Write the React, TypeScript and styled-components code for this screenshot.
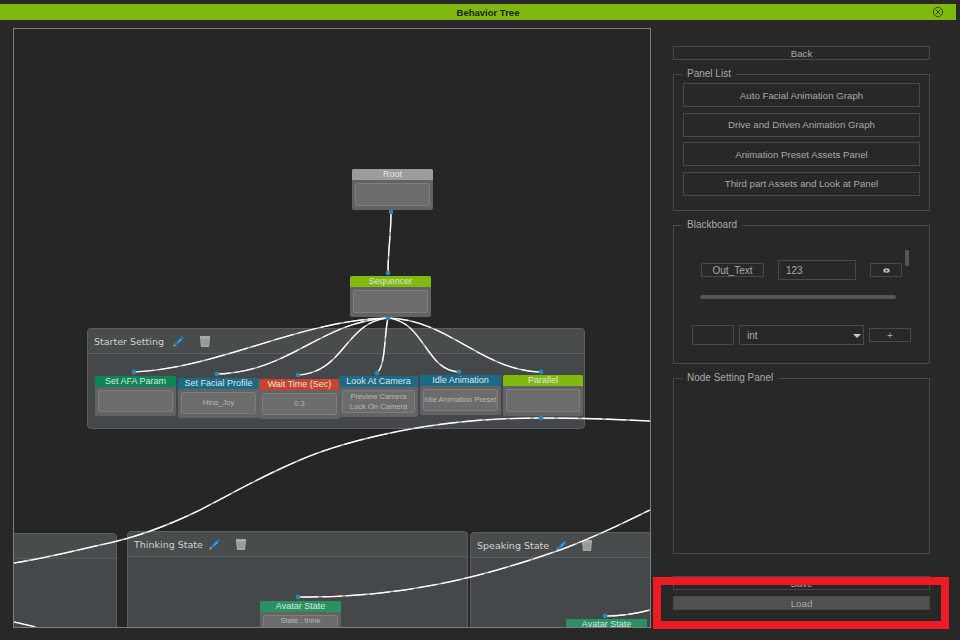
import styled, { createGlobalStyle } from "styled-components";

const GlobalStyle = createGlobalStyle`
    html, body {
        margin: 0;
        padding: 0;
        background: #282828;
        font-family: "Liberation Sans", Arial, sans-serif;
        font-size: 10px;
        color: #a8a8a8;
    }
`;

const Page = styled.div`
    position: relative;
    width: 960px;
    height: 640px;
    overflow: hidden;
    padding-top: 4px;
    box-sizing: border-box;
`;

const TitleBar = styled.div`
    position: relative;
    width: 956px;
    height: 16px;
    background: #7fb80e;
    color: #1c2410;
    font-size: 9.5px;
    font-weight: bold;
    line-height: 17px;
    padding-left: 20px;
    box-sizing: border-box;
    text-align: center;
`;

const CloseIcon = styled.svg`
    position: absolute;
    right: 12px;
    top: 2px;
`;

const Main = styled.div`
    display: flex;
    margin-top: 8px;
    padding-left: 13px;
    gap: 22px;
`;

const Canvas = styled.div`
    position: relative;
    width: 638px;
    height: 600px;
    box-sizing: border-box;
    border: 1px solid #7c7c7c;
    background: #262626;
    overflow: hidden;
`;

const Wires = styled.svg`
    position: absolute;
    left: 0;
    top: 0;
    z-index: 3;
`;

const Group = styled.div<{ $x: number; $y: number; $w: number; $h: number }>`
    position: absolute;
    left: ${(p) => p.$x - 14}px;
    top: ${(p) => p.$y - 29}px;
    width: ${(p) => p.$w}px;
    height: ${(p) => p.$h}px;
    box-sizing: border-box;
    background: #44484a;
    border: 1px solid #5c5f60;
    border-radius: 4px;
`;

const GroupHeader = styled.div`
    display: flex;
    align-items: center;
    height: 25px;
    box-sizing: border-box;
    padding-left: 6px;
    background: #484c4d;
    border-bottom: 1px solid #5a5e5f;
    border-radius: 4px 4px 0 0;
`;

const GroupName = styled.span<{ $w: number }>`
    width: ${(p) => p.$w}px;
    font-family: "DejaVu Sans", sans-serif;
    font-size: 9.5px;
    color: #d2d2d2;
    white-space: nowrap;
`;

const GroupTools = styled.span<{ $gap: number }>`
    display: flex;
    align-items: center;
    gap: ${(p) => p.$gap}px;
`;

const Node = styled.div<{ $x: number; $y: number; $w: number; $h: number }>`
    position: absolute;
    z-index: 2;
    left: ${(p) => p.$x - 14}px;
    top: ${(p) => p.$y - 29}px;
    width: ${(p) => p.$w}px;
    height: ${(p) => p.$h}px;
    display: flex;
    flex-direction: column;
    background: #636363;
    border-radius: 2px;
`;

const NodeTitle = styled.div<{ $color: string }>`
    flex: none;
    height: 11px;
    background: ${(p) => p.$color};
    border-radius: 2px 2px 0 0;
    color: #dfe6e0;
    font-size: 9px;
    line-height: 10px;
    text-align: center;
    white-space: nowrap;
    overflow: hidden;
`;

const NodeBody = styled.div<{ $top?: boolean }>`
    flex: 1;
    margin: 3px 3px 4px;
    display: flex;
    flex-direction: column;
    align-items: center;
    justify-content: ${(p) => (p.$top ? "flex-start" : "center")};
    background: #6c6c6c;
    border: 1px solid #7e7e7e;
    border-radius: 2px;
    color: #b8b8b8;
    font-size: 7.6px;
    line-height: 10px;
    white-space: nowrap;
    overflow: hidden;
`;

const Side = styled.div`
    display: flex;
    flex-direction: column;
    width: 257px;
    padding-top: 18px;
`;

const Button = styled.div<{ $filled?: boolean; $h?: number }>`
    height: ${(p) => p.$h ?? 14}px;
    box-sizing: border-box;
    display: flex;
    align-items: center;
    justify-content: center;
    flex: none;
    border: 1px solid #484848;
    background: ${(p) => (p.$filled ? "#505050" : "transparent")};
    color: #a8a8a8;
    font-size: 9.7px;
`;

const Fieldset = styled.fieldset<{ $h: number }>`
    height: ${(p) => p.$h}px;
    box-sizing: border-box;
    flex: none;
    margin: 8px 0 0;
    padding: 0;
    border: 1px solid #484848;
    min-width: 0;
`;

const Legend = styled.legend`
    margin-left: 8px;
    padding: 0 5px;
    height: 12px;
    line-height: 12px;
    font-size: 10px;
    color: #a8a8a8;
`;

const PanelButtons = styled.div`
    display: flex;
    flex-direction: column;
    gap: 5.5px;
    padding: 3px 9px 0;
`;

const Blackboard = styled.div`
    position: relative;
    padding-top: 29px;
`;

const Row = styled.div<{ $left: number; $top: number }>`
    display: flex;
    align-items: center;
    margin: ${(p) => p.$top}px 0 0 ${(p) => p.$left}px;
`;

const Cell = styled.div<{ $w: number; $h: number; $mr?: number; $left?: boolean }>`
    width: ${(p) => p.$w}px;
    height: ${(p) => p.$h}px;
    margin-right: ${(p) => p.$mr ?? 0}px;
    box-sizing: border-box;
    display: flex;
    align-items: center;
    justify-content: ${(p) => (p.$left ? "flex-start" : "center")};
    padding-left: ${(p) => (p.$left ? 7 : 0)}px;
    border: 1px solid #484848;
    color: #a8a8a8;
    font-size: 10px;
`;

const Caret = styled.span`
    margin-left: auto;
    margin-top: 1px;
    margin-right: 2px;
    width: 0;
    height: 0;
    border-left: 4px solid transparent;
    border-right: 4px solid transparent;
    border-top: 4px solid #c8c8c8;
`;

const ScrollThumb = styled.div`
    position: absolute;
    left: 231px;
    top: 19px;
    width: 4px;
    height: 16px;
    background: #565656;
    border-radius: 1px;
`;

const HScroll = styled.div`
    width: 196px;
    height: 4px;
    margin: 15px 0 0 26px;
    background: #565656;
    border-radius: 2px;
`;

const SaveSlot = styled.div`
    margin-top: 22px;
    display: flex;
    flex-direction: column;
    gap: 6px;
`;

const Highlight = styled.div`
    position: absolute;
    left: 653px;
    top: 577px;
    width: 296px;
    height: 52px;
    box-sizing: border-box;
    border: 8px solid #ed1c24;
`;

const PenIcon = () => (
    <svg width="13" height="13" viewBox="0 0 13 13">
        <path d="M1 12 L2.2 8.6 L4.4 10.8 Z" fill="#b98a4a" />
        <path d="M2.2 8.6 L8.6 2.4 L10.8 4.6 L4.4 10.8 Z" fill="#1d74c0" />
        <path d="M5.4 7.2 L9 3.6 L9.8 4.4 L6.2 8 Z" fill="#58b4ea" />
        <path d="M8.6 2.4 L10.4 1 L12 2.6 L10.8 4.6 Z" fill="#2f6f9e" />
    </svg>
);

const TrashIcon = () => (
    <svg width="10" height="11" viewBox="0 0 10 11">
        <path d="M0 0 H10 V2 L9 11 H1 L0 2 Z" fill="#a8a8a8" />
        <path d="M3 3 V10 M5 3 V10 M7 3 V10 M1 4 H9 M1 6 H9 M1.5 8 H8.5" stroke="#8e8e8e" strokeWidth="0.6" />
    </svg>
);

const EyeIcon = () => (
    <svg width="7" height="5" viewBox="0 0 7 5">
        <ellipse cx="3.5" cy="2.5" rx="3.2" ry="2.2" fill="#bdbdbd" />
        <circle cx="3.5" cy="2.5" r="1" fill="#333" />
    </svg>
);

const groups = [
    { name: "", x: -60, y: 533, w: 177, h: 130, nameW: 0, gap: 0 },
    { name: "Starter Setting", x: 87, y: 328, w: 498, h: 101, nameW: 78, gap: 15 },
    { name: "Thinking State", x: 127, y: 531, w: 341, h: 130, nameW: 74, gap: 15 },
    { name: "Speaking State", x: 470, y: 532, w: 260, h: 130, nameW: 78, gap: 14 },
];

const nodes = [
    { title: "Root", color: "#9c9c9c", x: 352, y: 169, w: 81, h: 41, lines: [] },
    { title: "Sequencer", color: "#80ba0c", x: 350, y: 276, w: 81, h: 41, lines: [] },
    { title: "Set AFA Param", color: "#0b8552", x: 95, y: 376, w: 81, h: 40, lines: [] },
    { title: "Set Facial Profile", color: "#1c6a8a", x: 178, y: 378, w: 81, h: 40, lines: ["Hina_Joy"] },
    { title: "Wait Time (Sec)", color: "#c9432c", x: 259, y: 379, w: 81, h: 40, lines: ["0.3"] },
    { title: "Look At Camera", color: "#1c6a8a", x: 339, y: 376, w: 79, h: 41, lines: ["Preview Camera", "Lock On Camera"] },
    { title: "Idle Animation", color: "#1c6a8a", x: 420, y: 375, w: 81, h: 40, lines: ["Idle Animation Preset"] },
    { title: "Parallel", color: "#80ba0c", x: 503, y: 375, w: 80, h: 41, lines: [] },
    { title: "Avatar State", color: "#2a9160", x: 260, y: 601, w: 81, h: 41, lines: ["State : think"], topText: true },
    { title: "Avatar State", color: "#2a9160", x: 566, y: 619, w: 81, h: 41, lines: [] },
];

const wirePaths = [
    "M391 212 C391 235 388 250 388 273",
    "M388 318 C300 320 220 368 134 372",
    "M388 318 C320 322 290 372 217 374",
    "M388 318 C345 322 345 372 298 375",
    "M388 318 C384 335 386 365 377 373",
    "M388 318 C425 322 425 370 459 372",
    "M388 318 C450 320 480 370 541 372",
    "M650 421 C610 419 580 418 541 418 C490 418 440 423 400 431 C365 438 330 447 300 460 C260 477 235 492 200 510 C165 527 135 538 100 545 C70 552 40 559 14 563",
    "M298 597 C400 598 480 578 560 550 C600 535 625 522 650 510",
    "M14 622 C22 624 28 625 36 627",
    "M605 616 C620 616 635 614 650 610",
];

const ports = [
    [391, 212], [388, 273], [388, 318], [134, 372], [217, 374], [298, 375],
    [377, 373], [459, 372], [541, 372], [541, 418], [298, 597], [605, 616],
];

const panels = [
    "Auto Facial Animation Graph",
    "Drive and Driven Animation Graph",
    "Animation Preset Assets Panel",
    "Third part Assets and Look at Panel",
];

export default function App() {
    return (
        <Page>
            <GlobalStyle />
            <TitleBar>
                Behavior Tree
                <CloseIcon width="12" height="12" viewBox="0 0 12 12" fill="none" stroke="#33500a" strokeWidth="1">
                    <circle cx="6" cy="6" r="4.7" />
                    <path d="M3.8 3.8 L8.2 8.2 M8.2 3.8 L3.8 8.2" />
                </CloseIcon>
            </TitleBar>
            <Main>
                <Canvas>
                    {groups.map((g) => (
                        <Group key={g.x} $x={g.x} $y={g.y} $w={g.w} $h={g.h}>
                            <GroupHeader>
                                {g.name && (
                                    <>
                                        <GroupName $w={g.nameW}>{g.name}</GroupName>
                                        <GroupTools $gap={g.gap}>
                                            <PenIcon />
                                            <TrashIcon />
                                        </GroupTools>
                                    </>
                                )}
                            </GroupHeader>
                        </Group>
                    ))}
                    {nodes.map((n) => (
                        <Node key={n.x} $x={n.x} $y={n.y} $w={n.w} $h={n.h}>
                            <NodeTitle $color={n.color}>{n.title}</NodeTitle>
                            <NodeBody $top={n.topText}>
                                {n.lines.map((line) => (
                                    <span key={line}>{line}</span>
                                ))}
                            </NodeBody>
                        </Node>
                    ))}
                    <Wires width="636" height="598" viewBox="14 29 636 598" fill="none">
                        {wirePaths.map((d) => (
                            <path key={d} d={d} stroke="#c4c4c4" strokeWidth="1.4" />
                        ))}
                        {wirePaths.map((d) => (
                            <path key={d} d={d} stroke="#ffffff" strokeWidth="1.2" strokeDasharray="20 4" />
                        ))}
                        {ports.map(([cx, cy]) => (
                            <circle key={`${cx}-${cy}`} cx={cx} cy={cy} r="2.4" fill="#2a86b8" />
                        ))}
                    </Wires>
                </Canvas>
                <Side>
                    <Button>Back</Button>
                    <Fieldset $h={143}>
                        <Legend>Panel List</Legend>
                        <PanelButtons>
                            {panels.map((label) => (
                                <Button key={label} $h={24}>
                                    {label}
                                </Button>
                            ))}
                        </PanelButtons>
                    </Fieldset>
                    <Fieldset $h={145}>
                        <Legend>Blackboard</Legend>
                        <Blackboard>
                            <ScrollThumb />
                            <Row $left={27} $top={0}>
                                <Cell $w={63} $h={14} $mr={14}>Out_Text</Cell>
                                <Cell $w={78} $h={20} $mr={14} $left>123</Cell>
                                <Cell $w={32} $h={14}>
                                    <EyeIcon />
                                </Cell>
                            </Row>
                            <HScroll />
                            <Row $left={18} $top={26}>
                                <Cell $w={42} $h={20} $mr={5} />
                                <Cell $w={125} $h={20} $mr={5} $left>
                                    int
                                    <Caret />
                                </Cell>
                                <Cell $w={42} $h={14}>+</Cell>
                            </Row>
                        </Blackboard>
                    </Fieldset>
                    <Fieldset $h={182}>
                        <Legend>Node Setting Panel</Legend>
                    </Fieldset>
                    <SaveSlot>
                        <Button>Save</Button>
                        <Button $filled>Load</Button>
                    </SaveSlot>
                </Side>
            </Main>
            <Highlight />
        </Page>
    );
}
